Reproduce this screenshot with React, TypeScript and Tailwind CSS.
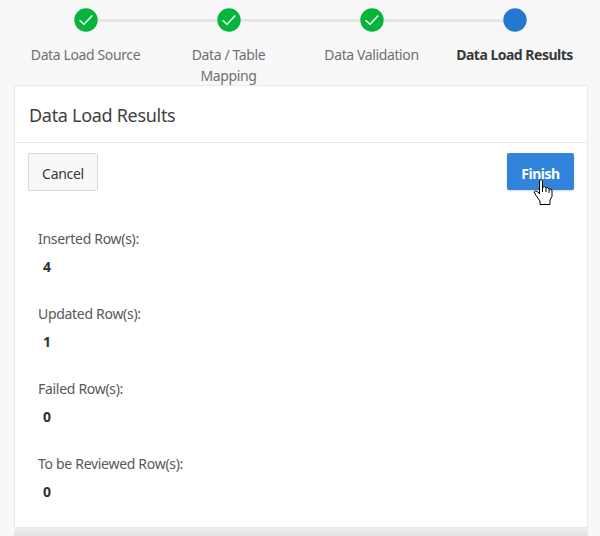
import React from "react";

type Step = { label: string; state: "done" | "current"; first?: boolean; style: string };

const steps: Step[] = [
  { label: "Data Load Source", state: "done", first: true, style: "w-[130px] text-[#707070] tracking-[-0.38px]" },
  { label: "Data / Table Mapping", state: "done", style: "w-[100px] text-[#707070] tracking-[-0.38px]" },
  { label: "Data Validation", state: "done", style: "w-[130px] text-[#707070] tracking-[-0.38px]" },
  { label: "Data Load Results", state: "current", style: "w-[143px] font-bold text-[#383838] tracking-[-0.5px]" },
];

const results = [
  { label: "Inserted Row(s):", value: 4 },
  { label: "Updated Row(s):", value: 1 },
  { label: "Failed Row(s):", value: 0 },
  { label: "To be Reviewed Row(s):", value: 0 },
];

function Marker({ state }: { state: Step["state"] }) {
  return (
    <svg width="24" height="24" viewBox="0 0 24 24" className="block shrink-0">
      <circle cx="12" cy="12" r="11.7" fill={state === "done" ? "#05b43a" : "#2578cf"} />
      {state === "done" && (
        <path d="M5.6 12.2 10 16.2 18.3 7.6" fill="none" stroke="#fff" strokeWidth="1.5" />
      )}
    </svg>
  );
}

function HandCursor() {
  return (
    <svg width="20" height="27" viewBox="0 0 20 27" className="absolute top-[26px] left-[26px]">
      <path
        d="M6.5 1.5Q8.5-.5 9.5 2V8.5Q12 6.5 13 9Q15.5 7.5 16 10Q19 9.5 19 12V17.5L17 21V25.5H7V22L3 16.5 1 13Q2.5 10.5 5 13L6.5 15Z"
        fill="#fff"
        stroke="#000"
        strokeWidth="1"
      />
      <path d="M9.5 7v6M13 9v4M16 10v4" stroke="#000" strokeWidth="1" />
    </svg>
  );
}

export default function App() {
  return (
    <div className="flex h-[536px] w-[600px] flex-col overflow-hidden bg-[#f8f8f8] font-['Noto_Sans',sans-serif] text-[14px] text-[#404040]">
      <ol className="flex h-[85px] shrink-0 px-[14px] pt-2">
        {steps.map((s) => (
          <li key={s.label} className="flex flex-1 flex-col items-center">
            <div className="flex w-full items-center">
              <span className={s.first ? "h-[3px] flex-1" : "h-[3px] flex-1 bg-[#e5e5e5]"} />
              <Marker state={s.state} />
              <span className={s.state === "current" ? "h-[3px] flex-1" : "h-[3px] flex-1 bg-[#e5e5e5]"} />
            </div>
            <span className={`mt-[12px] text-center leading-[21px] ${s.style}`}>{s.label}</span>
          </li>
        ))}
      </ol>

      <section className="mx-[14px] mr-[12px] flex h-[443px] shrink-0 flex-col rounded-t-[2px] border border-[#e8e8e8] bg-white">
        <h1 className="flex h-[57px] shrink-0 items-center border-b border-[#e8e8e8] px-[14px] pt-[2px] text-[18px] tracking-[-0.3px]">
          Data Load Results
        </h1>
        <div className="flex justify-between px-[13px] pt-[10px]">
          <button className="h-[38px] w-[70px] rounded-[2px] border border-[#dcdcdc] bg-[#f8f8f8] pt-[2px] tracking-[-0.3px] text-[#383838]">
            Cancel
          </button>
          <div className="relative">
            <button className="h-[37px] w-[67px] rounded-[2px] bg-[#3183db] pt-[3px] font-bold tracking-[-0.5px] text-white shadow-[0_1px_2px_rgba(0,0,0,0.15)]">
              Finish
            </button>
            <HandCursor />
          </div>
        </div>
        <dl className="mt-[37px] px-[23px]">
          {results.map((r) => (
            <div key={r.label} className="h-[75px]">
              <dt className="leading-[22px] tracking-[-0.3px] text-[#585858]">{r.label}</dt>
              <dd className="mt-[6px] pl-[5px] font-bold leading-[22px] text-[#303030]">{r.value}</dd>
            </div>
          ))}
        </dl>
      </section>
      <div className="ml-[14px] mr-[12px] h-[8px] bg-gradient-to-b from-[#eeeeee] to-[#e2e2e2]" />
    </div>
  );
}
